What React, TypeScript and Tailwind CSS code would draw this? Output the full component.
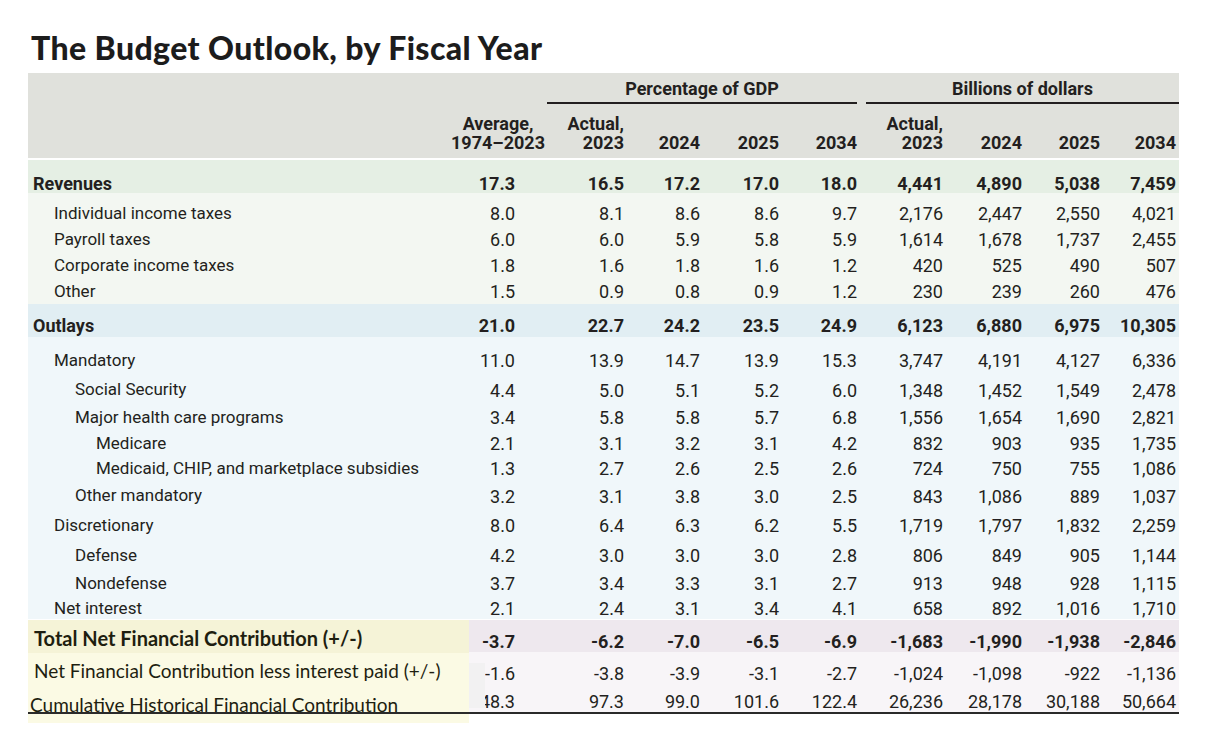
const grid =
  "grid grid-cols-[442px_75px_79px_76px_79px_78px_86px_79px_78px_76px] pr-[3px]"

interface Row {
  label: string
  pad: string
  h: string
  vals: string[]
}

const revenueRows: Row[] = [
  { label: "Individual income taxes", pad: "pl-[26px]", h: "h-[26px]", vals: ["8.0", "8.1", "8.6", "8.6", "9.7", "2,176", "2,447", "2,550", "4,021"] },
  { label: "Payroll taxes", pad: "pl-[26px]", h: "h-[26px]", vals: ["6.0", "6.0", "5.9", "5.8", "5.9", "1,614", "1,678", "1,737", "2,455"] },
  { label: "Corporate income taxes", pad: "pl-[26px]", h: "h-[26px]", vals: ["1.8", "1.6", "1.8", "1.6", "1.2", "420", "525", "490", "507"] },
  { label: "Other", pad: "pl-[26px]", h: "h-[26px]", vals: ["1.5", "0.9", "0.8", "0.9", "1.2", "230", "239", "260", "476"] }
]

const outlayRows: Row[] = [
  { label: "Mandatory", pad: "pl-[26px]", h: "h-[31px]", vals: ["11.0", "13.9", "14.7", "13.9", "15.3", "3,747", "4,191", "4,127", "6,336"] },
  { label: "Social Security", pad: "pl-[47px]", h: "h-[28px]", vals: ["4.4", "5.0", "5.1", "5.2", "6.0", "1,348", "1,452", "1,549", "2,478"] },
  { label: "Major health care programs", pad: "pl-[47px]", h: "h-[26px]", vals: ["3.4", "5.8", "5.8", "5.7", "6.8", "1,556", "1,654", "1,690", "2,821"] },
  { label: "Medicare", pad: "pl-[68px]", h: "h-[25px]", vals: ["2.1", "3.1", "3.2", "3.1", "4.2", "832", "903", "935", "1,735"] },
  { label: "Medicaid, CHIP, and marketplace subsidies", pad: "pl-[68px]", h: "h-[27px]", vals: ["1.3", "2.7", "2.6", "2.5", "2.6", "724", "750", "755", "1,086"] },
  { label: "Other mandatory", pad: "pl-[47px]", h: "h-[28px]", vals: ["3.2", "3.1", "3.8", "3.0", "2.5", "843", "1,086", "889", "1,037"] },
  { label: "Discretionary", pad: "pl-[26px]", h: "h-[31px]", vals: ["8.0", "6.4", "6.3", "6.2", "5.5", "1,719", "1,797", "1,832", "2,259"] },
  { label: "Defense", pad: "pl-[47px]", h: "h-[29px]", vals: ["4.2", "3.0", "3.0", "3.0", "2.8", "806", "849", "905", "1,144"] },
  { label: "Nondefense", pad: "pl-[47px]", h: "h-[25px]", vals: ["3.7", "3.4", "3.3", "3.1", "2.7", "913", "948", "928", "1,115"] },
  { label: "Net interest", pad: "pl-[26px]", h: "h-[24px]", vals: ["2.1", "2.4", "3.1", "3.4", "4.1", "658", "892", "1,016", "1,710"] }
]

// first numeric column sits 30px in from its right edge (header overhangs it)
const Cells = ({ vals }: { vals: string[] }) => (
  <>
    {vals.map((v, i) => (
      <div key={i} className={i === 0 ? "pr-[30px] text-right" : "text-right"}>
        {v}
      </div>
    ))}
  </>
)

const BodyRow = ({ row }: { row: Row }) => (
  <div className={`${grid} ${row.h} items-center`}>
    <div className={`${row.pad} text-[17px]`}>{row.label}</div>
    <Cells vals={row.vals} />
  </div>
)

const BoldBand = ({ label, vals, bg }: { label: string; vals: string[]; bg: string }) => (
  <div className={`${grid} h-[33px] items-end font-bold leading-[18px] ${bg}`}>
    <div className="pl-[5px]">{label}</div>
    <Cells vals={vals} />
  </div>
)

const ColHead = ({ top, bottom }: { top?: string; bottom: string }) => (
  <div className="flex flex-col items-end leading-[19px]">
    <span>{top ?? "\u00a0"}</span>
    <span>{bottom}</span>
  </div>
)

const App = () => {
  const lessInterest = ["-1.6", "-3.8", "-3.9", "-3.1", "-2.7", "-1,024", "-1,098", "-922", "-1,136"]
  const cumulative = ["48.3", "97.3", "99.0", "101.6", "122.4", "26,236", "28,178", "30,188", "50,664"]
  const total = ["-3.7", "-6.2", "-7.0", "-6.5", "-6.9", "-1,683", "-1,990", "-1,938", "-2,846"]

  return (
    <div className="min-h-[748px] w-[1214px] bg-white pt-[29px] text-[#231f20]">
      <h1 className="pl-[31px] font-['Lato',sans-serif] text-[32px] font-black leading-[38px] tracking-[0.4px] text-[#1c1c1c]">
        The Budget Outlook, by Fiscal Year
      </h1>

      <div className="ml-[28px] mt-[6px] w-[1151px] font-['Roboto',sans-serif] text-[18px]">
        {/* header */}
        <div className="bg-[#e0e1dc] pt-[6px] pb-[6px] font-bold">
          <div className={`${grid} leading-[20px]`}>
            <div className="col-span-2" />
            <div className="col-span-4 ml-[2px] border-b-2 border-[#231f20] pb-[3px] text-center">
              Percentage of GDP
            </div>
            <div className="col-span-4 ml-[9px] mr-[-3px] border-b-2 border-[#231f20] pb-[3px] text-center">
              Billions of dollars
            </div>
          </div>
          <div className={`${grid} mt-[10px]`}>
            <div />
            <div className="flex justify-end">
              <div className="flex flex-col items-center whitespace-nowrap leading-[19px]">
                <span>Average,</span>
                <span>1974–2023</span>
              </div>
            </div>
            <ColHead top="Actual," bottom="2023" />
            <ColHead bottom="2024" />
            <ColHead bottom="2025" />
            <ColHead bottom="2034" />
            <ColHead top="Actual," bottom="2023" />
            <ColHead bottom="2024" />
            <ColHead bottom="2025" />
            <ColHead bottom="2034" />
          </div>
        </div>

        <div className="mt-[2px]">
          <BoldBand
            label="Revenues"
            bg="bg-[#e5efe4]"
            vals={["17.3", "16.5", "17.2", "17.0", "18.0", "4,441", "4,890", "5,038", "7,459"]}
          />
        </div>
        <div className="bg-[#f3f7f2] pt-[7px]">
          {revenueRows.map((r) => (
            <BodyRow key={r.label} row={r} />
          ))}
        </div>

        <BoldBand
          label="Outlays"
          bg="bg-[#e1eef3] pb-[2px]"
          vals={["21.0", "22.7", "24.2", "23.5", "24.9", "6,123", "6,880", "6,975", "10,305"]}
        />
        <div className="bg-[#f0f7fa] pt-[8px]">
          {outlayRows.map((r) => (
            <BodyRow key={r.label} row={r} />
          ))}
        </div>

        {/* pasted rows */}
        <div className="relative mt-[1px]">
          <div className="absolute left-0 top-0 z-10 flex h-[103px] w-[441px] flex-col">
            <div className="h-[33px] bg-[#f5f3d7]" />
            <div className="flex-1 bg-[#fbfae4]" />
          </div>
          <div className="absolute left-[441px] top-[43px] z-10 h-[45px] w-[16px] bg-[#f2f1f2]" />

          <div className={`${grid} h-[32px] items-center bg-[#eee8ee] pt-[6px] font-bold`}>
            <div className="relative z-20 -translate-y-[3px] pl-[6px] font-['Lato',sans-serif] text-[20px] text-[#1e1e10]">
              Total Net Financial Contribution (+/-)
            </div>
            <Cells vals={total} />
          </div>

          <div className="bg-[#f8f5f8] pt-[6px] pb-[6px]">
            <div className={`${grid} h-[30px] items-center`}>
              <div className="relative z-20 -translate-y-[2px] pl-[6px] font-['Lato',sans-serif] text-[19px] text-[#1e1e10]">
                Net Financial Contribution less interest paid (+/-)
              </div>
              <Cells vals={lessInterest} />
            </div>
            <div className={`${grid} h-[18px] items-center`}>
              <div className="relative z-20 translate-y-[3px] pl-[2px] font-['Lato',sans-serif] text-[19px] leading-[18px] text-[#1e1e10]">
                Cumulative Historical Financial Contribution
              </div>
              <Cells vals={cumulative} />
            </div>
          </div>
          <div className="relative z-20 h-[2px] bg-[#2a2a2a]" />
        </div>
      </div>
    </div>
  )
}

export default App
